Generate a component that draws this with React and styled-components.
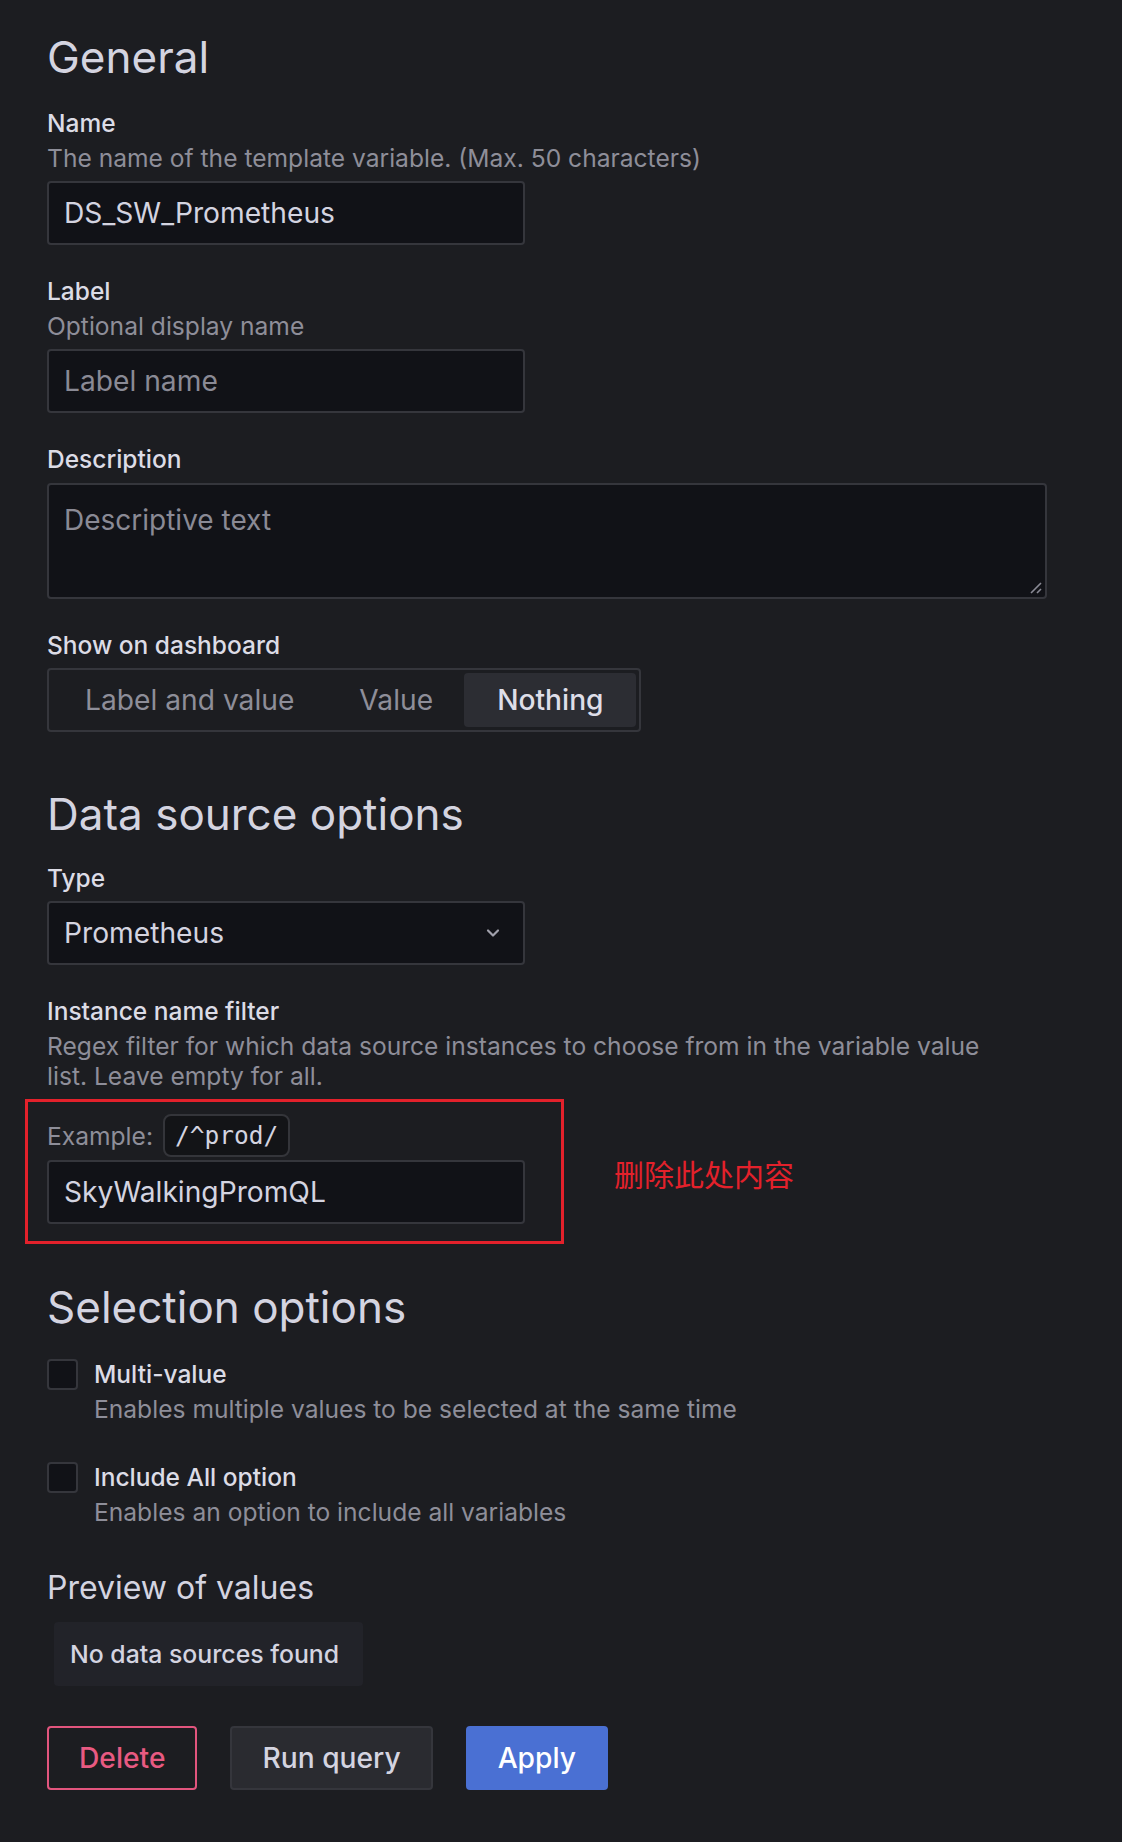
import React from 'react'
import styled, { createGlobalStyle } from 'styled-components'

const GlobalStyle = createGlobalStyle`
  html, body {
    margin: 0;
    padding: 0;
    background: #1c1d21;
  }
  body {
    font-family: Inter, "Noto Sans", sans-serif;
    color: #ccccdc;
  }
`

const Page = styled.div`
  padding: 31px 47px 52px;
  min-height: 1842px;
  box-sizing: border-box;
`

const SectionTitle = styled.h3`
  margin: ${({ $top }) => $top ?? 56}px 0 ${({ $bottom }) => $bottom ?? 23}px;
  font-size: 44px;
  line-height: 53px;
  font-weight: 400;
  color: #d4d4e0;
`

const SubTitle = styled.h5`
  margin: 42px 0 15px;
  font-size: 32px;
  line-height: 38px;
  font-weight: 400;
  color: #d4d4e0;
`

const Field = styled.div`
  display: flex;
  flex-direction: column;
  margin-bottom: 30px;
`

const Label = styled.label`
  font-size: 24.5px;
  line-height: 32px;
  font-weight: 500;
  color: #dcdce6;
`

const Description = styled.div`
  margin-top: 4px;
  font-size: 24.6px;
  line-height: 30px;
  color: #8e8e99;
  max-width: ${({ $wide }) => ($wide ? '950px' : 'none')};
`

const Input = styled.div`
  margin-top: ${({ $gap }) => $gap ?? 8}px;
  width: 478px;
  height: 64px;
  box-sizing: border-box;
  display: flex;
  align-items: center;
  justify-content: space-between;
  padding: 0 22px 0 15px;
  background: #111217;
  border: 2px solid #35363c;
  border-radius: 4px;
  font-size: 28.2px;
  color: ${({ $placeholder }) => ($placeholder ? '#8a8a95' : '#d4d4e0')};
`

const TextArea = styled.div`
  position: relative;
  margin-top: 8px;
  width: 1000px;
  height: 116px;
  box-sizing: border-box;
  padding: 18px 15px;
  background: #111217;
  border: 2px solid #35363c;
  border-radius: 4px;
  font-size: 28px;
  line-height: 34px;
  color: #8a8a95;
`

const ResizeHandle = styled.svg`
  position: absolute;
  right: 2px;
  bottom: 2px;
`

const RadioGroup = styled.div`
  margin-top: 7px;
  display: inline-flex;
  align-self: flex-start;
  gap: 4px;
  padding: 3px;
  height: 64px;
  box-sizing: border-box;
  border: 2px solid #35363c;
  border-radius: 4px;
`

const RadioOption = styled.div`
  display: flex;
  align-items: center;
  padding: 0 ${({ $pr }) => $pr}px 0 ${({ $pl }) => $pl}px;
  border-radius: 4px;
  font-size: 28.2px;
  font-weight: ${({ $active }) => ($active ? 500 : 400)};
  color: ${({ $active }) => ($active ? '#dedee8' : '#8e8e99')};
  background: ${({ $active }) => ($active ? '#2c2d33' : 'transparent')};
`

const AnnotatedRow = styled.div`
  display: flex;
  align-items: center;
  margin: 8px 0 0 -22px;
`

const RedBox = styled.div`
  width: 539px;
  box-sizing: border-box;
  border: 3px solid #e3212b;
  padding: 12px 0 17px 19px;
`

const Note = styled.span`
  margin: 2px 0 0 50px;
  font-family: "Noto Sans CJK SC", sans-serif;
  font-size: 30px;
  color: #e3212b;
`

const ExampleLine = styled.div`
  display: flex;
  align-items: center;
  gap: 10px;
  font-size: 24.6px;
  color: #8e8e99;
`

const Code = styled.code`
  display: inline-flex;
  align-items: center;
  height: 43px;
  box-sizing: border-box;
  padding: 0 10px;
  background: #131417;
  border: 2px solid #34353a;
  border-radius: 8px;
  font-family: "DejaVu Sans Mono", monospace;
  font-size: 24.5px;
  color: #d4d4e0;
`

const CheckRow = styled.div`
  display: flex;
  gap: 16px;
  margin-bottom: 37px;
`

const CheckBox = styled.div`
  flex: none;
  margin-top: 1px;
  width: 31px;
  height: 31px;
  box-sizing: border-box;
  background: #111217;
  border: 2px solid #35363c;
  border-radius: 4px;
`

const CheckText = styled.div`
  display: flex;
  flex-direction: column;
`

const PreviewBox = styled.div`
  margin-left: 7px;
  display: inline-flex;
  align-items: center;
  height: 64px;
  padding: 0 24px 0 16px;
  background: #222329;
  border-radius: 4px;
  font-size: 24.8px;
  font-weight: 500;
  color: #d4d4e0;
`

const Actions = styled.div`
  display: flex;
  gap: 33px;
  margin-top: 40px;
`

const Button = styled.button`
  height: 64px;
  box-sizing: border-box;
  padding: 0 ${({ $pad }) => $pad}px;
  border-radius: 4px;
  font-family: Inter, sans-serif;
  font-size: 28.2px;
  font-weight: 500;
  cursor: pointer;
  ${({ $variant }) =>
    $variant === 'destructive'
      ? 'background: transparent; border: 2px solid #e2557e; color: #e85a82;'
      : $variant === 'primary'
      ? 'background: #4a70d3; border: none; color: #ffffff;'
      : 'background: #2a2b30; border: 2px solid #35363c; color: #d4d4e0;'}
`

const Chevron = () => (
  <svg width="16" height="12" viewBox="0 0 16 12" fill="none">
    <path d="M3 3.5l5 5 5-5" stroke="#a0a0ab" strokeWidth="2.2" strokeLinecap="round" strokeLinejoin="round" />
  </svg>
)

export default function App() {
  return (
    <Page>
      <GlobalStyle />
      <SectionTitle $top={0}>General</SectionTitle>

      <Field>
        <Label>Name</Label>
        <Description>The name of the template variable. (Max. 50 characters)</Description>
        <Input>DS_SW_Prometheus</Input>
      </Field>

      <Field>
        <Label>Label</Label>
        <Description>Optional display name</Description>
        <Input $placeholder>Label name</Input>
      </Field>

      <Field>
        <Label>Description</Label>
        <TextArea>
          Descriptive text
          <ResizeHandle width="16" height="16" viewBox="0 0 16 16">
            <path d="M14 4L4 14M14 10l-4 4" stroke="#8a8a95" strokeWidth="1.6" />
          </ResizeHandle>
        </TextArea>
      </Field>

      <Field>
        <Label>Show on dashboard</Label>
        <RadioGroup>
          <RadioOption $pl={33} $pr={30}>Label and value</RadioOption>
          <RadioOption $pl={31} $pr={27}>Value</RadioOption>
          <RadioOption $pl={33} $pr={32} $active>Nothing</RadioOption>
        </RadioGroup>
      </Field>

      <SectionTitle $bottom={21}>Data source options</SectionTitle>

      <Field>
        <Label>Type</Label>
        <Input $gap={7}>
          Prometheus
          <Chevron />
        </Input>
      </Field>

      <Field>
        <Label>Instance name filter</Label>
        <Description $wide>
          Regex filter for which data source instances to choose from in the variable value list. Leave empty for all.
        </Description>
        <AnnotatedRow>
          <RedBox>
            <ExampleLine>
              Example: <Code>/^prod/</Code>
            </ExampleLine>
            <Input $gap={3}>SkyWalkingPromQL</Input>
          </RedBox>
          <Note>删除此处内容</Note>
        </AnnotatedRow>
      </Field>

      <SectionTitle $top={37} $bottom={24}>Selection options</SectionTitle>

      <CheckRow>
        <CheckBox />
        <CheckText>
          <Label>Multi-value</Label>
          <Description>Enables multiple values to be selected at the same time</Description>
        </CheckText>
      </CheckRow>

      <CheckRow>
        <CheckBox />
        <CheckText>
          <Label>Include All option</Label>
          <Description>Enables an option to include all variables</Description>
        </CheckText>
      </CheckRow>

      <SubTitle>Preview of values</SubTitle>
      <PreviewBox>No data sources found</PreviewBox>

      <Actions>
        <Button $variant="destructive" $pad={30}>Delete</Button>
        <Button $pad={30}>Run query</Button>
        <Button $variant="primary" $pad={32}>Apply</Button>
      </Actions>
    </Page>
  )
}
